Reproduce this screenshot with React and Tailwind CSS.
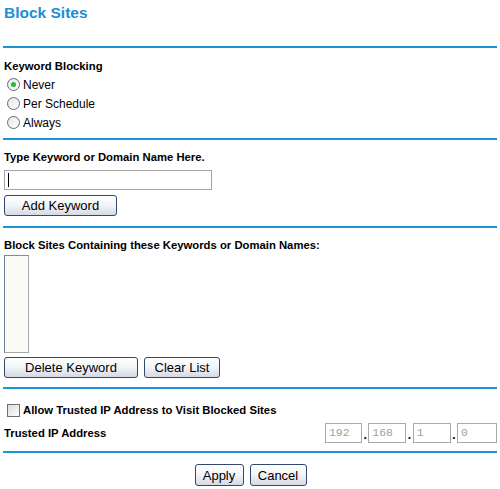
import React from 'react';

const Btn = ({ children, className = '' }) => (
  <button
    className={`h-[21px] rounded-[3px] border border-[#2f4a6e] bg-gradient-to-b from-white via-[#f3f4f8] to-[#d5d9e4] text-[13px] leading-none text-black ${className}`}
  >
    {children}
  </button>
);

const Radio = ({ label, checked }) => (
  <div className="flex h-[19px] items-center pl-[3px]">
    <span className="flex h-[13px] w-[13px] items-center justify-center rounded-full border border-[#5f6b7a] bg-gradient-to-br from-[#e6e6e6] to-white">
      {checked && <span className="h-[5px] w-[5px] rounded-full bg-[#2fb43a]" />}
    </span>
    <span className="ml-[3px] text-[12px]">{label}</span>
  </div>
);

const Line = () => <div className="mx-[3px] h-[2px] bg-[#1b95d5]" />;

const Label = ({ children, className = '' }) => (
  <div className={`flex h-[18px] items-center text-[11.3px] font-bold ${className}`}>{children}</div>
);

const IpBox = ({ value, w }) => (
  <div
    className={`flex h-[20px] items-center border border-[#a9a9a9] pl-[3px] font-['Liberation_Mono',monospace] text-[11.5px] text-[#a0a0a0] ${w}`}
  >
    {value}
  </div>
);

const Dot = () => <span className="mx-[1.5px] self-end pb-[2px] text-[12px] font-bold leading-none">.</span>;

export default function App() {
  return (
    <div className="h-[489px] w-[500px] bg-white font-['Liberation_Sans',Arial,sans-serif] text-black">
      <div className="h-[46px] pl-[4px] pt-[3px]">
        <h1 className="text-[15.5px] font-bold leading-[20px] text-[#1a8fd3]">Block Sites</h1>
      </div>
      <Line />

      <div className="pl-[4px] pt-[9px] pb-[6px]">
        <Label>Keyword Blocking</Label>
        <Radio label="Never" checked />
        <Radio label="Per Schedule" />
        <Radio label="Always" />
      </div>
      <Line />

      <div className="pl-[4px] pt-[8px] pb-[9px]">
        <Label>Type Keyword or Domain Name Here.</Label>
        <div className="mt-[4px] flex h-[20px] w-[208px] items-center border border-[#a5a5a5] pl-[3px]">
          <span className="h-[14px] w-[1px] bg-black" />
        </div>
        <Btn className="mt-[5px] w-[113px]">Add Keyword</Btn>
      </div>
      <Line />

      <div className="pl-[4px] pt-[8px] pb-[9px]">
        <Label>Block Sites Containing these Keywords or Domain Names:</Label>
        <div className="mt-[1px] h-[98px] w-[25px] border border-[#a8a8a8] border-l-[#6d7d93] border-t-[#7d8ca3] bg-[#fbfbf6]" />
        <div className="mt-[4px] flex gap-[6px]">
          <Btn className="w-[134px]">Delete Keyword</Btn>
          <Btn className="w-[76px]">Clear List</Btn>
        </div>
      </div>
      <Line />

      <div className="pl-[4px] pr-[3px] pt-[12px] pb-[8px]">
        <Label className="pl-[3px]">
          <span className="mr-[3px] h-[13px] w-[13px] border border-[#6f6f6f] bg-gradient-to-br from-[#dcdcdc] to-white" />
          Allow Trusted IP Address to Visit Blocked Sites
        </Label>
        <div className="mt-[4px] flex h-[20px] items-center">
          <span className="text-[11.3px] font-bold">Trusted IP Address</span>
          <div className="ml-auto flex h-[20px]">
            <IpBox value="192" w="w-[37px]" />
            <Dot />
            <IpBox value="168" w="w-[38px]" />
            <Dot />
            <IpBox value="1" w="w-[38px]" />
            <Dot />
            <IpBox value="0" w="w-[40px]" />
          </div>
        </div>
      </div>
      <Line />

      <div className="flex justify-center gap-[6px] pt-[11px] pl-[1px]">
        <Btn className="h-[22px] w-[49px]">Apply</Btn>
        <Btn className="h-[22px] w-[57px]">Cancel</Btn>
      </div>
    </div>
  );
}
